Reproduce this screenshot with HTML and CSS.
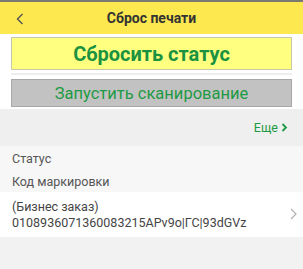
FILE: index.html
```html
<!DOCTYPE html>
<html>
<head>
<meta charset="utf-8">
<link rel="stylesheet" href="styles.css">
</head>
<body>
<div class="app">
  <header class="topbar">
    <svg class="back" width="8" height="12" viewBox="0 0 8 12"><path d="M6.5 1 L1.5 6 L6.5 11" fill="none" stroke="#555" stroke-width="1.4"/></svg>
    <div class="title">Сброс печати</div>
  </header>
  <section class="actions">
    <div class="btn btn-reset">Сбросить статус</div>
    <div class="sep"></div>
    <div class="btn btn-scan">Запустить сканирование</div>
  </section>
  <div class="more-bar">
    <span class="more">Еще<svg width="7" height="9" viewBox="0 0 7 9"><path d="M1.5 1 L5 4.5 L1.5 8" fill="none" stroke="#1e9a45" stroke-width="1.8"/></svg></span>
  </div>
  <div class="heads">
    <div class="head">Статус</div>
    <div class="head">Код маркировки</div>
  </div>
  <div class="row">
    <div class="row-text">
      <div>(Бизнес заказ)</div>
      <div>0108936071360083215APv9o|ГС|93dGVz</div>
    </div>
    <svg class="chev" width="7" height="12" viewBox="0 0 7 12"><path d="M1 1 L6 6 L1 11" fill="none" stroke="#b0b0b0" stroke-width="1.2"/></svg>
  </div>
</div>
</body>
</html>
```
FILE: styles.css
```css
html, body {
  margin: 0;
  padding: 0;
}
body {
  width: 303px;
  height: 269px;
  background: #f2f2f2;
  font-family: Roboto, "Noto Sans", sans-serif;
  overflow: hidden;
}
.topbar {
  height: 32px;
  border-top: 2px solid #7a7a72;
  background: #fde84f;
  display: flex;
  align-items: center;
  justify-content: center;
  position: relative;
}
.back {
  position: absolute;
  left: 16px;
  top: 11px;
}
.title {
  font-weight: bold;
  font-size: 14px;
  color: #333;
}
.actions {
  background: #fff;
  padding: 3px 11px 2px 11px;
  display: flex;
  flex-direction: column;
}
.btn {
  box-sizing: border-box;
  display: flex;
  align-items: center;
  justify-content: center;
  color: #1e9a45;
}
.btn-reset {
  height: 33px;
  background: #ffff80;
  border: 1px solid #c8c8a8;
  font-weight: bold;
  font-size: 20px;
  color: #1b923f;
}
.sep {
  height: 2px;
  background: #eeeeee;
  margin: 3px 0 4px 0;
}
.btn-scan {
  height: 28px;
  background: #c2c2c2;
  border: 1px solid #a8a8a8;
  font-size: 16.5px;
}
.more-bar {
  height: 37px;
  background: #efefef;
  display: flex;
  align-items: center;
  justify-content: flex-end;
  padding-right: 15px;
}
.more {
  color: #1e9a45;
  font-size: 12.5px;
  display: flex;
  align-items: center;
  gap: 3px;
}
.heads {
  background: #f7f7f7;
  padding: 1px 12px 0 12px;
  height: 45px;
}
.head {
  font-size: 12.5px;
  color: #555;
  height: 23px;
  line-height: 23px;
}
.row {
  background: #fff;
  height: 45px;
  display: flex;
  align-items: center;
  padding: 0 6px 0 12px;
}
.row-text {
  flex: 1;
  font-size: 12.5px;
  color: #444;
  line-height: 16px;
}
.chev {
  margin-top: -2px;
}
```
